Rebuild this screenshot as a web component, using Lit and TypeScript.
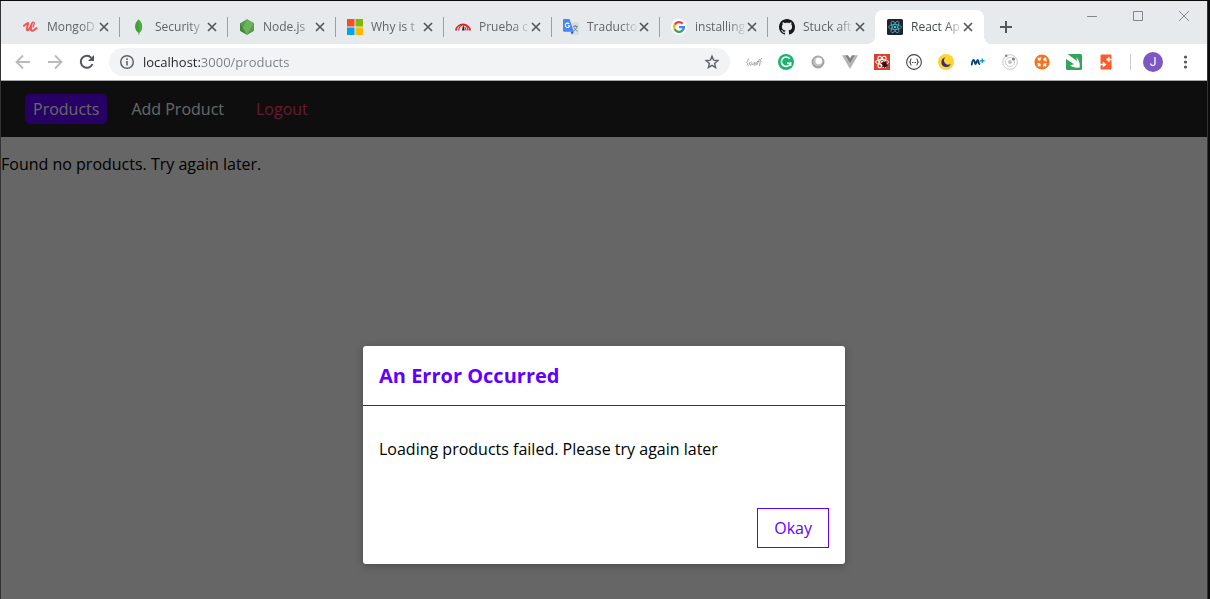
import { LitElement, html, css, svg } from "lit";
import { customElement, state } from "lit/decorators.js";
import { classMap } from "lit/directives/class-map.js";

const icon = (body: unknown, label = "") => html`
  <svg width="16" height="16" viewBox="0 0 16 16" fill="none" role="img" aria-label=${label}>${body}</svg>`;

const petals = (color: string, width: number) => svg`
  <g stroke=${color} stroke-width=${width} fill="none">
    <ellipse cx="8" cy="8" rx="6.4" ry="2.5"/>
    <ellipse cx="8" cy="8" rx="6.4" ry="2.5" transform="rotate(60 8 8)"/>
    <ellipse cx="8" cy="8" rx="6.4" ry="2.5" transform="rotate(120 8 8)"/>
  </g><circle cx="8" cy="8" r="1.3" fill=${color}/>`;

const favicons = {
  udemy: svg`<path d="M0.800 6.800C2.400 6 3.800 4 4.800 4C6 4 3 9.200 4 11C5 12.400 7.600 9 8.800 4.500C8 7.500 7.200 11.800 9.200 11.800C11 11.800 12 9.800 13.600 9.200" stroke="#f0555a" stroke-width="2" stroke-linecap="round" stroke-linejoin="round"/><path d="M9 4C10 2.600 11.600 3 11.200 4.600L10 8.500" stroke="#f0555a" stroke-width="1.300"/>`,
  mongo: svg`<path d="M7.600 0.600C3 4.600 2.800 10.400 7.600 14.200V15.800H8.200V14.200C12.400 10.400 12 4.600 7.600 0.600Z" fill="#3fa037"/><path d="M7.600 0.600C12 4.600 12.400 10.400 8 14.200Z" fill="#4faa41"/><path d="M7.700 13V16" stroke="#9bb59a" stroke-width=".7"/>`,
  node: svg`<path d="M8 0.300L15 4.200V11.800L8 15.800L1 11.800V4.200Z" fill="#56a04b"/><path d="M1 4.200L8 15.800L1 11.800Z" fill="#3f873f"/><path d="M8 0.300L15 4.200L8 15.800L4 9Z" fill="#6cb35d"/><path d="M15 4.200V11.800L8 15.800Z" fill="#5a9b50"/>`,
  microsoft: svg`<path d="M0 0h7.500v7.500H0z" fill="#f25022"/><path d="M8.500 0H16v7.500H8.500z" fill="#7fba00"/><path d="M0 8.500h7.500V16H0z" fill="#00a4ef"/><path d="M8.500 8.500H16V16H8.500z" fill="#ffb900"/>`,
  gauge: svg`<path d="M0.800 11.500A7.300 7.300 0 0 1 15.200 11.500" stroke="#e01f2d" stroke-width="1.700"/><path d="M3.700 11.500C4 8.500 5.400 6.800 7 6.300M9 6C11.600 6.500 12.800 8.600 13 11.500M9.500 8.200C10.500 8.800 11 10 11 11.500" stroke="#e01f2d" stroke-width="1.200"/><path d="M8.200 5L9.600 11.500H7Z" fill="#2c2022"/>`,
  translate: svg`<path d="M7 3H15a1 1 0 0 1 1 1V16H10Z" fill="#dadce0"/><path d="M10 7.300h4.800M12.300 6v1.300M14 7.500c-.6 2-1.800 3.600-3.300 4.600M11 8.500c.8 1.600 2 3 3.500 3.700" stroke="#607d8b" stroke-width=".9"/><path d="M1 0H6.500L10.800 12.700H1.200A1.200 1.200 0 0 1 0 11.500V1A1 1 0 0 1 1 0Z" fill="#4a86f0"/><path d="M7.600 12.700H10.800L9 15.700Z" fill="#2f56c6"/><path d="M6.300 5A2.200 2.200 0 1 0 6.700 6.700H4.800" stroke="#fff" stroke-width="1.100"/>`,
  google: svg`<circle cx="8" cy="8" r="8" fill="#fff"/><g stroke-width="2.300"><path d="M11.600 4.600A4.900 4.900 0 0 0 3.700 5.700" stroke="#ea4335"/><path d="M3.700 5.600A4.900 4.900 0 0 0 3.700 10.400" stroke="#fbbc05"/><path d="M3.700 10.300A4.900 4.900 0 0 0 11.300 11.600" stroke="#34a853"/><path d="M11.200 11.700A4.900 4.900 0 0 0 12.900 8.100H8" stroke="#4285f4"/></g>`,
  github: svg`<path fill="#17191c" d="M8 0C3.580 0 0 3.580 0 8c0 3.540 2.290 6.530 5.470 7.590.4.070.55-.17.55-.38 0-.19-.01-.82-.01-1.490-2.010.37-2.530-.49-2.690-.94-.09-.23-.48-.94-.82-1.130-.28-.15-.68-.52-.01-.53.63-.01 1.080.58 1.230.82.72 1.210 1.870.87 2.330.66.070-.52.28-.87.51-1.070-1.780-.2-3.640-.89-3.640-3.950 0-.87.31-1.590.82-2.150-.08-.2-.36-1.020.08-2.120 0 0 .67-.21 2.200.82.640-.18 1.320-.27 2-.27s1.360.09 2 .27c1.530-1.040 2.200-.82 2.200-.82.440 1.100.16 1.920.08 2.120.51.56.82 1.270.82 2.150 0 3.070-1.870 3.750-3.650 3.950.29.25.54.73.54 1.480 0 1.070-.01 1.930-.01 2.200 0 .21.15.46.55.38A8.010 8.010 0 0 0 16 8c0-4.420-3.580-8-8-8z"/>`,
  react: svg`<rect width="16" height="16" rx="1.500" fill="#20232a"/>${petals("#4fb4cf", 0.8)}`,
};

const extensions: { name: string; art: unknown }[] = [
  { name: "Script", art: svg`<g stroke="#a0a0a0" stroke-width="1"><path d="M3 4.500C1.200 5 2.600 7.500 0.800 8.500C2 9 1 11.500 2.800 12M13 12C14.500 10.500 13.200 9 14.800 7.500C13.800 6.500 15 4.500 16 4.200M3.800 8C3.200 10 3.600 11.500 4.800 11C6 10.500 6 8.500 5.600 7.500M6 10C6.800 11.500 8 10.500 8.300 8.500C8.600 7.500 9 10.500 8.600 11.500M9 10C9.800 8 10.800 8 10.600 9.500C10.400 11 9.600 11.500 9.200 11M10.800 11C12 9.500 12.600 6.500 13.600 5M11 7.500H13.500"/></g>` },
  { name: "Grammarly", art: svg`<circle cx="8" cy="8" r="8" fill="#1db46f"/><path d="M11.700 4.700A4.700 4.700 0 1 0 12.500 9.300H9" stroke="#fff" stroke-width="1.600"/><path d="M12.700 8.500V12" stroke="#fff" stroke-width="1.300"/>` },
  { name: "Sphere", art: svg`<circle cx="8" cy="8" r="6.500" fill="#a4a4a4"/><circle cx="8" cy="7.500" r="4.700" fill="#c4c4c4"/><circle cx="8.800" cy="7" r="3.200" fill="#fff"/>` },
  { name: "Vue devtools", art: svg`<path d="M0 1.200H3.200L8 9.500L12.800 1.200H16L8 15Z" fill="#b4b4b4"/><path d="M3.200 1.200H6L8 4.600L10 1.200H12.800L8 9.500Z" fill="#7f7f7f"/>` },
  { name: "React devtools", art: svg`<path d="M0 0h16v16H0z" fill="#d9412f"/>${petals("#fff", 1)}<ellipse cx="10.500" cy="10.500" rx="2.300" ry="3" transform="rotate(-35 10.500 10.500)" fill="#2b1513"/><path d="M7 9L14 12M8 13L13.500 8M10 14.500L12 7" stroke="#2b1513" stroke-width=".8"/>` },
  { name: "JSON viewer", art: svg`<circle cx="8" cy="8" r="7.400" stroke="#444" stroke-width="1.100"/><path d="M5.500 4.800C4.100 4.800 5.100 7.500 3.800 8C5.100 8.500 4.100 11.200 5.500 11.200M10.500 4.800C11.900 4.800 10.900 7.500 12.200 8C10.900 8.500 11.900 11.200 10.500 11.200" stroke="#444" stroke-width="1.100"/><path d="M6 8.500H10" stroke="#444" stroke-width="1.200" stroke-dasharray="1 .5"/>` },
  { name: "Night mode", art: svg`<circle cx="8" cy="8" r="8" fill="#fbd630"/><path d="M7.500 3.500A4.800 4.800 0 1 0 12.800 9.500A4 4 0 0 1 7.500 3.500Z" fill="#3c2a80"/>` },
  { name: "Movistar", art: svg`<path d="M1.800 10.500C2 7.500 3 5.800 3.800 6C4.800 6.300 4.800 10 5.600 10C6.400 10 6.800 6 7.800 6C8.800 6 8.200 10 9.400 10" stroke="#0c4478" stroke-width="1.900" stroke-linecap="round"/><path d="M12.300 4.500V9M10.100 6.700H14.600" stroke="#1a94c8" stroke-width="1.400"/>` },
  { name: "Orbit", art: svg`<circle cx="8" cy="8" r="7.300" stroke="#c7c7c7"/><circle cx="8" cy="8" r="4.600" stroke="#cfcfcf"/><circle cx="8" cy="8" r="2" fill="#c2c2c2"/><circle cx="11.500" cy="5" r="1.600" fill="#808080"/><circle cx="4.200" cy="1.800" r="1.300" fill="#888"/>` },
  { name: "Helper", art: svg`<circle cx="8" cy="8" r="7.600" fill="#f7721e"/><g stroke="#fff"><circle cx="8" cy="8" r="4.300" stroke-width="1.300" stroke-dasharray="4 2.750" stroke-dashoffset="5.400"/><path d="M4 4L6.300 6.300M12 4L9.700 6.300M4 12L6.300 9.700M12 12L9.700 9.700" stroke-width="1.800"/></g>` },
  { name: "Bird", art: svg`<rect width="16" height="16" rx="1.500" fill="#34a45c"/><path d="M0 0H1.500L11.300 7.300L10.200 3.200C13 5.500 14 8.500 13.800 13.500C9.500 14 6 13.200 4 11.200L8.200 10.200L0 5Z" fill="#fff"/>` },
  { name: "Exchange", art: svg`<rect x="2.500" y="0.500" width="11" height="15" rx="1" fill="#ff5a2b"/><path d="M14 5.500H10M2 10.500H6" stroke="#fff" stroke-width="1.600"/><path d="M11.500 2.500L7.800 5.500L11.500 8.500ZM4.800 7.500L8.500 10.500L4.800 13.500Z" fill="#fff"/>` },
];

const tabs: { title: string; art: unknown }[] = [
  { title: "MongoD", art: favicons.udemy },
  { title: "Security", art: favicons.mongo },
  { title: "Node.js", art: favicons.node },
  { title: "Why is t", art: favicons.microsoft },
  { title: "Prueba c", art: favicons.gauge },
  { title: "Traducto", art: favicons.translate },
  { title: "installing", art: favicons.google },
  { title: "Stuck aft", art: favicons.github },
  { title: "React Ap", art: favicons.react },
];

const reset = css`
  * { box-sizing: border-box; }
  button {
    font: inherit; color: inherit; background: none; border: 0; padding: 0; cursor: pointer;
  }
  svg { display: block; flex: none; }
`;

@customElement("tab-strip")
export class TabStrip extends LitElement {
  @state() private active = 8;

  static styles = [reset, css`
    :host {
      display: flex; align-items: flex-start; justify-content: space-between;
      height: 43px; background: #e7eaed; color: #5f6368;
      font: 12px/16px "Open Sans", "Noto Sans", sans-serif;
    }
    .tabs { display: flex; padding: 9px 0 0 10px; }
    .tab {
      position: relative; display: flex; align-items: center;
      width: 108px; height: 34px; padding-left: 12px;
    }
    .tab::before {
      content: ""; position: absolute; left: 0; top: 7px; width: 1px; height: 20px; background: #9aa0a6;
    }
    .tab:first-child::before, .tab.active::before { display: none; }
    .tab.active { width: 109px; background: #fff; border-radius: 8px 8px 0 0; color: #45494d; }
    .foot { position: absolute; bottom: 0; width: 8px; height: 8px; }
    .foot.left { left: -8px; background: radial-gradient(circle at 0 0, transparent 8px, #fff 8px); }
    .foot.right { right: -8px; background: radial-gradient(circle at 100% 0, transparent 8px, #fff 8px); }
    .label { display: flex; align-items: center; gap: 8px; width: 73px; }
    .title {
      flex: none; min-width: 49px; white-space: nowrap; text-align: left;
      -webkit-mask-image: linear-gradient(to right, #000 34px, transparent 52px);
      mask-image: linear-gradient(to right, #000 34px, transparent 52px);
    }
    .close { flex: none; }
    .new { display: grid; place-items: center; width: 28px; height: 34px; margin-left: 8px; }
    .controls { display: flex; color: #83878b; }
    .controls button { display: grid; place-items: center; width: 46px; height: 30px; }
  `];

  render() {
    return html`
      <div class="tabs">
        ${tabs.map((tab, i) => html`
          <div class=${classMap({ tab: true, active: i === this.active })}>
            ${i === this.active ? html`<span class="foot left"></span><span class="foot right"></span>` : null}
            <button class="label" @click=${() => (this.active = i)}>
              ${icon(tab.art)}<span class="title">${tab.title}</span>
            </button>
            <button class="close" aria-label="Close tab">
              ${icon(svg`<path d="M4 4L12 12M12 4L4 12" stroke="#54585c" stroke-width="1.700"/>`)}
            </button>
          </div>`)}
        <button class="new" aria-label="New tab">
          ${icon(svg`<path d="M8 2V14M2 8H14" stroke="#54585c" stroke-width="2"/>`)}
        </button>
      </div>
      <div class="controls">
        <button aria-label="Minimize">${icon(svg`<path d="M3 8.500H13" stroke="currentColor"/>`)}</button>
        <button aria-label="Maximize">${icon(svg`<path d="M3.500 3.500H12.500V12.500H3.500Z" stroke="currentColor"/>`)}</button>
        <button aria-label="Close">${icon(svg`<path d="M3 3L13 13M13 3L3 13" stroke="currentColor"/>`)}</button>
      </div>`;
  }
}

@customElement("tool-bar")
export class ToolBar extends LitElement {
  static styles = [reset, css`
    :host {
      display: flex; align-items: center; padding: 4px 6px; background: #fff; color: #5f6368;
      border-bottom: 1px solid #a6a6a6; font: 13px/20px "Open Sans", "Noto Sans", sans-serif;
    }
    .tool { display: grid; place-items: center; flex: none; width: 32px; height: 28px; }
    .tool.off { color: #b8babc; }
    .address {
      display: flex; flex: 1; align-items: center; gap: 8px; min-width: 0; height: 28px;
      margin: 0 8px 0 6px; padding: 0 10px; border-radius: 14px; background: #f1f3f4;
    }
    .url {
      flex: 1; min-width: 0; border: 0; padding: 0; outline: 0; font: inherit;
      -webkit-text-fill-color: transparent; color: #202124;
      background: linear-gradient(to right, #202124 57px, #7a7f84 57px);
      -webkit-background-clip: text; background-clip: text;
    }
    .divider { width: 1px; height: 16px; margin: 0 6px 0 8px; background: #c8cbce; }
    .avatar {
      display: grid; place-items: center; width: 20px; height: 20px; border-radius: 50%;
      background: #7e57c2; color: #fff; font: 12px/20px Roboto, sans-serif;
    }
  `];

  render() {
    return html`
      <button class="tool off" aria-label="Back">${icon(svg`<path d="M15 8H2M8 1.500L1.500 8L8 14.500" stroke="currentColor" stroke-width="1.800"/>`)}</button>
      <button class="tool off" aria-label="Forward">${icon(svg`<path d="M1 8H14M8 1.500L14.500 8L8 14.500" stroke="currentColor" stroke-width="1.800"/>`)}</button>
      <button class="tool" aria-label="Reload">${icon(svg`<path d="M13.400 10A6 6 0 1 1 12.300 3.800" stroke="#54585c" stroke-width="2"/><path d="M15 1V7H9Z" fill="#54585c"/>`)}</button>
      <div class="address">
        ${icon(svg`<circle cx="8" cy="8" r="6.300" stroke="currentColor" stroke-width="1.500"/><path d="M8 7V11.500M8 4.300V6" stroke="currentColor" stroke-width="1.600"/>`, "Site information")}
        <input class="url" aria-label="Address" value="localhost:3000/products" spellcheck="false" />
        <button aria-label="Bookmark">${icon(svg`<path d="M8 2.200L9.600 6.200L13.900 6.600L10.600 9.400L11.600 13.600L8 11.300L4.400 13.600L5.400 9.400L2.100 6.600L6.400 6.200Z" stroke="currentColor" stroke-width="1.400"/>`)}</button>
      </div>
      ${extensions.map((e) => html`<button class="tool" aria-label=${e.name}>${icon(e.art)}</button>`)}
      <span class="divider"></span>
      <button class="tool" aria-label="Profile"><span class="avatar">J</span></button>
      <button class="tool" aria-label="Menu">${icon(svg`<g fill="#54585c"><circle cx="8.500" cy="3" r="1.600"/><circle cx="8.500" cy="8" r="1.600"/><circle cx="8.500" cy="13" r="1.600"/></g>`)}</button>`;
  }
}

@customElement("error-modal")
export class ErrorModal extends LitElement {
  static styles = [reset, css`
    :host {
      position: absolute; inset: 0; display: flex; justify-content: center; align-items: flex-start;
      padding: 265px 16px 16px; background: rgba(0, 0, 0, 0.6);
    }
    .modal {
      width: 100%; max-width: 482px; border-radius: 3px; background: #fff; color: #000;
      box-shadow: 0 2px 8px rgba(0, 0, 0, 0.26);
    }
    .head { padding: 16px; border-bottom: 1px solid #6200ff; }
    h1 { margin: 0; font-size: 20px; line-height: 27px; font-weight: 700; color: #6200ff; }
    .body { padding: 16px; }
    p { margin: 16px 0; }
    .actions { display: flex; justify-content: flex-end; padding: 16px; }
    .okay { height: 40px; padding: 0 16px; border: 1px solid #6200ff; color: #6200ff; }
  `];

  render() {
    return html`
      <div class="modal" role="dialog" aria-modal="true" aria-labelledby="title">
        <header class="head"><h1 id="title">An Error Occurred</h1></header>
        <div class="body"><p>Loading products failed. Please try again later</p></div>
        <div class="actions">
          <button class="okay" @click=${() => this.dispatchEvent(new CustomEvent("dismiss"))}>Okay</button>
        </div>
      </div>`;
  }
}

@customElement("app-root")
export class AppRoot extends LitElement {
  @state() private failed = true;

  static styles = [reset, css`
    :host {
      box-sizing: border-box; display: flex; flex-direction: column; min-height: 100vh;
      border: solid #0b0b0b; border-width: 1px 2px 0 0; background: #fff;
      font: 16px/22px "Open Sans", "Noto Sans", sans-serif;
    }
    .window {
      display: flex; flex-direction: column; flex: 1;
      border: solid #333; border-width: 0 1px;
    }
    .page { position: relative; flex: 1; color: #000; }
    nav { display: flex; align-items: center; gap: 16px; height: 56px; padding: 0 24px; background: #242424; }
    .link { padding: 4px 8px; border-radius: 5px; color: #fff; text-decoration: none; }
    .link.current { background: #6200ff; }
    .link.logout { color: #ff4081; }
    .empty { margin: 16px 0; }
  `];

  render() {
    return html`
      <div class="window">
        <tab-strip></tab-strip>
        <tool-bar></tool-bar>
        <div class="page">
          <nav>
            <a class="link current" href="#products">Products</a>
            <a class="link" href="#add">Add Product</a>
            <button class="link logout">Logout</button>
          </nav>
          <main><p class="empty">Found no products. Try again later.</p></main>
          ${this.failed ? html`<error-modal @dismiss=${() => (this.failed = false)}></error-modal>` : null}
        </div>
      </div>`;
  }
}
